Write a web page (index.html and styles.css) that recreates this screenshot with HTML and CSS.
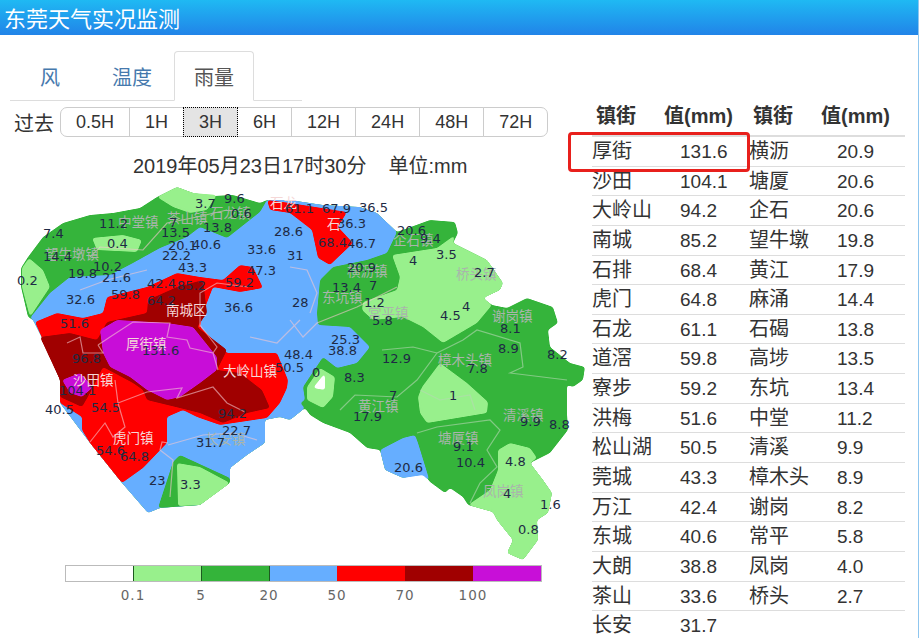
FILE: index.html
```html
<!DOCTYPE html>
<html lang="zh-CN">
<head>
<meta charset="utf-8">
<title>东莞天气实况监测</title>
<link rel="stylesheet" href="styles.css">
</head>
<body>
<div class="page">
  <header class="topbar">东莞天气实况监测</header>
  <main class="main">
    <section class="left">
      <nav class="tabs">
        <a class="tab">风</a>
        <a class="tab">温度</a>
        <a class="tab active">雨量</a>
      </nav>
      <div class="range">
        <span class="range-label">过去</span>
        <div class="btns">
          <span class="btn">0.5H</span><span class="btn">1H</span><span class="btn on">3H</span><span class="btn">6H</span><span class="btn">12H</span><span class="btn">24H</span><span class="btn">48H</span><span class="btn">72H</span>
        </div>
      </div>
      <div class="map-title">2019年05月23日17时30分<span class="unit">单位:mm</span></div>
      <svg class="map" viewBox="0 180 590 380" width="590" height="380" xmlns="http://www.w3.org/2000/svg">
        <defs>
          <filter id="soft" x="-5%" y="-5%" width="110%" height="110%">
            <feGaussianBlur stdDeviation="1.8"/>
            <feComponentTransfer>
              <feFuncA type="linear" slope="5" intercept="-2"/>
            </feComponentTransfer>
          </filter>
        </defs>
        <polygon class="g" points="21,268 28,257 43,237 63,223 90,215 113,213 140,208 157,197 177,187 193,193 213,196 233,195 260,203 267,200 290,200 323,205 360,207 377,213 397,232 430,220 455,222 458,233 453,243 487,260 503,283 500,290 483,298 492,305 507,308 527,298 553,307 558,323 548,330 550,347 570,363 585,367 583,380 573,387 567,385 567,413 568,430 550,453 530,463 543,480 552,493 548,513 537,520 538,540 523,560 507,553 513,540 497,520 493,512 468,505 463,497 450,488 445,493 430,482 423,473 403,478 385,470 380,450 367,448 350,433 323,423 310,415 305,408 290,420 280,417 265,420 265,443 247,455 230,468 230,480 200,505 160,508 148,513 122,483 90,443 60,403 60,380 43,340 33,320 28,317 21,287"/>
        <polygon class="b" points="30,318 50,293 70,277 110,275 133,263 160,248 187,237 200,227 227,238 260,212 267,200 290,200 323,205 360,207 377,213 397,232 387,253 367,260 333,267 320,280 317,313 318,325 350,327 370,347 357,363 337,368 323,357 303,387 305,400 300,403 305,408 290,420 280,417 265,420 265,443 247,455 230,468 230,480 200,505 160,508 148,513 122,483 90,443 60,403 60,380 43,340 33,320"/>
        <polygon class="g" points="158,508 173,462 180,455 230,478 230,483 200,505"/>
        <polygon class="lg" points="177,463 200,467 230,483 200,505 178,506"/>
        <polygon class="lg" points="29,258 43,270 50,287 30,317 22,287 22,268"/>
        <polygon class="lg" points="157,197 177,187 193,193 217,195 207,210 190,213 173,207"/>
        <polygon class="lg" points="92,238 123,235 142,240 137,252 97,250"/>
        <polygon class="lg" points="392,255 437,248 455,235 453,243 487,260 503,283 500,290 483,298 492,305 477,323 443,343 423,327 403,317 373,320 362,310 363,302 397,290 400,277"/>
        <polygon class="lg" points="418,397 420,413 427,423 487,413 488,402 467,383 440,363 422,387"/>
        <polygon class="lg" points="498,450 510,443 530,448 537,458 530,463 543,480 552,493 548,513 537,520 538,540 523,560 507,553 513,540 497,520 493,512 468,505 490,490 498,470"/>
        <polygon class="lg" points="307,387 320,368 335,377 333,397 323,408 307,400"/>
        <polygon class="w" points="313,388 325,373 325,390"/>
        <polygon class="b" points="380,450 403,438 415,435 418,443 430,482 423,475 403,478 385,470"/>
        <polygon class="r" points="35,322 57,313 83,318 103,313 107,297 147,287 177,273 200,277 223,280 240,265 253,267 263,288 240,292 213,287 203,313 200,327 227,353 277,353 288,380 287,388 280,403 267,418 220,425 197,417 183,410 167,417 167,443 143,468 122,483 90,443 82,430 82,417 60,403 60,380 43,340"/>
        <polygon class="r" points="267,200 290,203 347,212 338,227 353,243 330,265 318,258 312,230 290,213 270,210"/>
        <polygon class="dr" points="40,337 70,333 97,340 107,322 147,313 148,300 177,287 203,280 207,313 197,327 227,350 217,370 240,373 262,390 270,408 247,413 223,423 200,413 180,408 147,400 143,390 133,383 103,367 90,393 82,407 60,397 60,380"/>
        <polygon class="m" points="100,330 117,320 167,323 193,327 217,357 217,370 200,383 180,397 167,400 147,390 130,377 110,367 103,353"/>
        <polygon class="m" points="62,380 80,373 93,387 82,397 70,393"/>
        <g class="lines">
          <polyline points="98,345 110,337 133,322 170,323 167,337 187,340 190,348 213,353 218,370"/>
          <polyline points="67,343 80,337 83,353 103,353 98,345"/>
          <polyline points="200,327 200,293 217,283 248,287"/>
          <polyline points="200,325 217,347 213,353"/>
          <polyline points="115,380 118,403 147,392 182,388 177,398 213,387 227,403 245,412"/>
          <polyline points="118,403 125,427 113,437 105,423 90,442"/>
          <polyline points="168,443 162,442 160,450 173,460 170,497"/>
          <polyline points="168,445 203,435 233,433 257,440"/>
          <polyline points="90,257 100,247 143,250 167,223 197,217 227,210"/>
          <polyline points="80,290 107,280 147,270"/>
          <polyline points="290,320 303,337 317,323 357,307 397,287"/>
          <polyline points="290,267 307,270 317,293 310,313"/>
          <polyline points="250,337 277,343 300,320"/>
        </g>
        <g class="lines grey">
          <polyline points="417,433 437,427 490,420 500,430 487,450 497,467 480,483 470,503"/>
          <polyline points="437,353 463,340 477,330 520,343 523,367 510,373 567,380"/>
          <polyline points="437,353 413,347 382,350"/>
          <polyline points="437,353 417,380 397,397 355,395 340,410"/>
          <polyline points="420,390 440,400 470,395 475,410"/>
        </g>
        <g class="town pale">
          <text x="166" y="315">南城区</text>
          <text x="126" y="349">厚街镇</text>
          <text x="223" y="376">大岭山镇</text>
          <text x="73" y="385">沙田镇</text>
          <text x="113" y="443">虎门镇</text>
          <text x="327" y="229">石</text>
          <text x="270" y="208">石龙</text>
        </g>
        <g class="town">
          <text x="45" y="259">望牛墩镇</text>
          <text x="118" y="227">中堂镇</text>
          <text x="167" y="223">茶山镇</text>
          <text x="210" y="218">石龙镇</text>
          <text x="393" y="245">企石镇</text>
          <text x="347" y="276">横沥镇</text>
          <text x="322" y="302">东坑镇</text>
          <text x="368" y="318">常平镇</text>
          <text x="456" y="279">桥头镇</text>
          <text x="492" y="321">谢岗镇</text>
          <text x="438" y="365">樟木头镇</text>
          <text x="358" y="411">黄江镇</text>
          <text x="503" y="420">清溪镇</text>
          <text x="438" y="443">塘厦镇</text>
          <text x="483" y="496">凤岗镇</text>
          <text x="205" y="444">长安镇</text>
        </g>
        <g class="nums">
          <text x="99" y="228">11.2</text><text x="43" y="238">7.4</text><text x="224" y="203">9.6</text><text x="195" y="208">3.7</text><text x="231" y="218">0.6</text><text x="169" y="227">7</text><text x="161" y="237">13.5</text><text x="203" y="232">13.8</text><text x="107" y="248">0.4</text><text x="43" y="261">14.4</text><text x="168" y="250">20.1</text><text x="192" y="249">40.6</text><text x="162" y="260">22.2</text><text x="247" y="254">33.6</text><text x="287" y="260">31</text><text x="274" y="236">28.6</text><text x="93" y="271">10.2</text><text x="68" y="278">19.8</text><text x="102" y="282">21.6</text><text x="178" y="272">43.3</text><text x="247" y="275">47.3</text><text x="17" y="285">0.2</text><text x="147" y="288">42.4</text><text x="177" y="290">85.2</text><text x="225" y="287">59.2</text><text x="66" y="304">32.6</text><text x="111" y="299">59.8</text><text x="147" y="305">64.2</text><text x="224" y="312">36.6</text><text x="292" y="307">28</text><text x="60" y="328">51.6</text><text x="142" y="355">131.6</text><text x="72" y="363">96.8</text><text x="59" y="395">104.1</text><text x="284" y="359">48.4</text><text x="275" y="372">50.5</text>
          <text x="285" y="213">61.1</text><text x="322" y="213">67.9</text><text x="359" y="212">36.5</text><text x="337" y="228">36.3</text><text x="318" y="247">68.4</text><text x="347" y="248">46.7</text><text x="397" y="235">20.6</text><text x="420" y="243">9.4</text><text x="409" y="265">4</text><text x="436" y="259">3.5</text><text x="347" y="272">20.9</text><text x="474" y="277">2.7</text><text x="332" y="292">13.4</text><text x="369" y="290">7</text><text x="364" y="307">1.2</text><text x="462" y="311">4</text><text x="440" y="320">4.5</text><text x="372" y="325">5.8</text><text x="500" y="333">8.1</text><text x="331" y="344">25.3</text><text x="328" y="355">38.8</text><text x="382" y="363">12.9</text><text x="498" y="353">8.9</text><text x="547" y="359">8.2</text><text x="312" y="377">0</text><text x="467" y="373">7.8</text><text x="344" y="382">8.3</text><text x="389" y="400">7</text><text x="449" y="400">1</text><text x="353" y="421">17.9</text><text x="520" y="426">9.9</text><text x="549" y="429">8.8</text><text x="453" y="451">9.1</text><text x="456" y="467">10.4</text><text x="505" y="466">4.8</text><text x="394" y="472">20.6</text><text x="503" y="498">4</text><text x="540" y="509">1.6</text><text x="518" y="534">0.8</text>
          <text x="45" y="414">40.5</text><text x="91" y="412">54.5</text><text x="218" y="418">94.2</text><text x="222" y="435">22.7</text><text x="196" y="447">31.7</text><text x="96" y="455">54.6</text><text x="120" y="461">64.8</text><text x="149" y="485">23</text><text x="180" y="489">3.3</text>
        </g>
      </svg>
      <div class="legend">
        <div class="bar">
          <span class="seg s0"></span><span class="seg s1"></span><span class="seg s2"></span><span class="seg s3"></span><span class="seg s4"></span><span class="seg s5"></span><span class="seg s6"></span>
        </div>
        <div class="ticks"><span>0.1</span><span>5</span><span>20</span><span>50</span><span>70</span><span>100</span></div>
      </div>
    </section>
    <section class="right">
      <div class="thead"><span>镇街</span><span>值(mm)</span><span>镇街</span><span>值(mm)</span></div>
      <div class="row"><span>厚街</span><span>131.6</span><span>横沥</span><span>20.9</span></div>
      <div class="row"><span>沙田</span><span>104.1</span><span>塘厦</span><span>20.6</span></div>
      <div class="row"><span>大岭山</span><span>94.2</span><span>企石</span><span>20.6</span></div>
      <div class="row"><span>南城</span><span>85.2</span><span>望牛墩</span><span>19.8</span></div>
      <div class="row"><span>石排</span><span>68.4</span><span>黄江</span><span>17.9</span></div>
      <div class="row"><span>虎门</span><span>64.8</span><span>麻涌</span><span>14.4</span></div>
      <div class="row"><span>石龙</span><span>61.1</span><span>石碣</span><span>13.8</span></div>
      <div class="row"><span>道滘</span><span>59.8</span><span>高埗</span><span>13.5</span></div>
      <div class="row"><span>寮步</span><span>59.2</span><span>东坑</span><span>13.4</span></div>
      <div class="row"><span>洪梅</span><span>51.6</span><span>中堂</span><span>11.2</span></div>
      <div class="row"><span>松山湖</span><span>50.5</span><span>清溪</span><span>9.9</span></div>
      <div class="row"><span>莞城</span><span>43.3</span><span>樟木头</span><span>8.9</span></div>
      <div class="row"><span>万江</span><span>42.4</span><span>谢岗</span><span>8.2</span></div>
      <div class="row"><span>东城</span><span>40.6</span><span>常平</span><span>5.8</span></div>
      <div class="row"><span>大朗</span><span>38.8</span><span>凤岗</span><span>4.0</span></div>
      <div class="row"><span>茶山</span><span>33.6</span><span>桥头</span><span>2.7</span></div>
      <div class="row"><span>长安</span><span>31.7</span><span></span><span></span></div>
      <div class="highlight"></div>
    </section>
  </main>
</div>
</body>
</html>
```
FILE: styles.css
```css
* { box-sizing: border-box; }
html, body { margin: 0; padding: 0; background: #fff; }
body {
  font-family: "Liberation Sans", "Noto Sans CJK SC", sans-serif;
  color: #333;
  width: 920px;
  height: 638px;
  overflow: hidden;
}
.page { width: 919px; height: 638px; border-right: 1px solid #8fc6ef; }
.topbar {
  height: 35px;
  background: linear-gradient(#1fb9f3, #2184e8);
  color: #fff;
  font-size: 22px;
  line-height: 40px;
  padding-left: 4px;
  overflow: hidden;
}
.main { display: flex; height: 603px; }
.left { width: 592px; flex: none; padding-top: 16px; }
.tabs {
  display: flex;
  margin-left: 10px;
  width: 292px;
  height: 50px;
  border-bottom: 1px solid #ddd;
}
.tab {
  width: 80px;
  height: 50px;
  margin-right: 2px;
  text-align: center;
  font-size: 20px;
  line-height: 52px;
  color: #4679ad;
  border: 1px solid transparent;
}
.tab.active {
  color: #555;
  background: #fff;
  border-color: #ddd #ddd #fff;
  border-radius: 4px 4px 0 0;
}
.range { display: flex; align-items: center; margin-top: 6px; height: 30px; padding-left: 14px; }
.range-label { font-size: 20px; width: 46px; flex: none; }
.btns { display: flex; height: 30px; border-radius: 7px; }
.btn {
  font-size: 18px;
  line-height: 28px;
  padding: 0 15px;
  margin-left: -1px;
  background: #fff;
  border: 1px solid #ccc;
  color: #333;
}
.btn:first-child { margin-left: 0; border-radius: 7px 0 0 7px; }
.btn:last-child { border-radius: 0 7px 7px 0; }
.btn.on { background: #e4e4e4; border: 1px dotted #000; position: relative; }
.map-title {
  margin-top: 15px;
  height: 28px;
  line-height: 28px;
  padding-left: 133px;
  font-size: 20px;
  white-space: nowrap;
}
.unit { margin-left: 22px; }
.map { display: block; }
.map polygon { filter: url(#soft); }
.map .g { fill: #34b43a; }
.map .lg { fill: #98f08c; }
.map .b { fill: #66aeff; }
.map .r { fill: #ff0000; }
.map .dr { fill: #a00000; }
.map .m { fill: #c80fd8; }
.map .w { fill: #fff; }
.lines { fill: none; stroke: #f4c8d0; stroke-width: 1.2; opacity: 0.6; }
.lines.grey { stroke: #b7d8b5; }
.town { font-size: 13.5px; fill: #a9b5ab; font-family: "Noto Sans CJK SC", sans-serif; }
.town.pale { fill: #f5d7d7; }
.nums { font-family: "DejaVu Sans", sans-serif; font-size: 13px; fill: #1e2a44; }
.legend { margin-top: 5px; margin-left: 65px; width: 477px; }
.bar { display: flex; height: 17px; border: 1px solid #bbb; }
.seg { flex: 1 1 0; border-right: 1px solid #1c5a20; }
.s0 { background: #fff; }
.s1 { background: #98f08c; }
.s2 { background: #34b43a; }
.s3 { background: #66aeff; border-right-color: #66aeff; }
.s4 { background: #ff0000; border-right-color: #ff0000; }
.s5 { background: #a00000; border-right-color: #a00000; }
.s6 { background: #c80fd8; border-right-color: #c80fd8; }
.ticks {
  display: grid;
  grid-template-columns: repeat(6, 68px);
  margin-left: 34px;
  margin-top: 5px;
  font-family: "DejaVu Sans", sans-serif;
  font-size: 13.5px;
  letter-spacing: 1px;
  color: #666;
  text-align: center;
}
.right { position: relative; flex: none; width: 313px; padding-top: 65px; }
.thead {
  display: grid;
  grid-template-columns: 68px 89px 68px 83px;
  padding-left: 4px;
  height: 37px;
  line-height: 32px;
  font-size: 20px;
  font-weight: bold;
  border-bottom: 2px solid #ddd;
  white-space: nowrap;
}
.row {
  display: grid;
  grid-template-columns: 88px 69px 88px 68px;
  height: 29.65px;
  line-height: 29px;
  font-size: 19px;
  border-bottom: 1px solid #ddd;
  white-space: nowrap;
}
.row:last-of-type { border-bottom: 0; }
.row span:nth-child(odd) { font-size: 20px; }
.highlight {
  position: absolute;
  left: -24px;
  top: 97px;
  width: 182px;
  height: 40px;
  border: 3px solid #e8201c;
  border-radius: 4px;
}
```
